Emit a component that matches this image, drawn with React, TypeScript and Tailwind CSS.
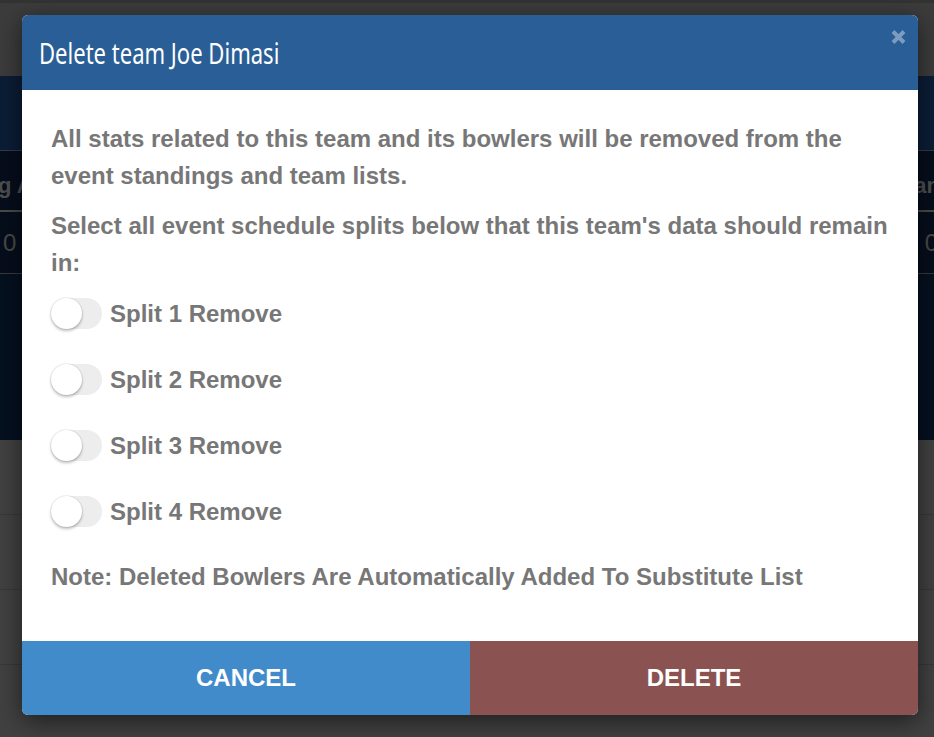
import { useState } from 'react';

const splits = ['Split 1 Remove', 'Split 2 Remove', 'Split 3 Remove', 'Split 4 Remove'];

function Toggle({ on, onChange }: { on: boolean; onChange: () => void }) {
  return (
    <button
      onClick={onChange}
      className={`relative w-[51px] h-[31px] rounded-full shrink-0 ${on ? 'bg-[#4cd964]' : 'bg-[#ededed]'}`}
    >
      <span
        className={`absolute top-0 h-[31px] w-[31px] rounded-full bg-white shadow-[0_2px_3px_rgba(0,0,0,0.25),0_0_0_1px_rgba(0,0,0,0.06)] ${on ? 'left-[20px]' : 'left-0'}`}
      />
    </button>
  );
}

export default function App() {
  const [checked, setChecked] = useState<boolean[]>([false, false, false, false]);

  const flip = (i: number) => setChecked(c => c.map((v, j) => (j === i ? !v : v)));

  return (
    <div className="relative w-[934px] h-[737px] overflow-hidden font-['Liberation_Sans',Arial,sans-serif]">
      {/* page behind the overlay (already dimmed) */}
      <div className="flex flex-col h-full">
        <div className="h-[76px] bg-[#3c3c3c] border-t-[3px] border-[#333]" />
        <div className="h-[74px] bg-[#0b1d36]" />
        <div className="h-[60px] bg-[#060e1c] border-t border-[#353b44] flex items-center justify-between pt-[10px] text-[22px] font-bold text-[#4e4e4e]">
          <span className="-ml-[2px]">g A</span>
          <span className="-mr-[6px]">an</span>
        </div>
        <div className="h-[63px] bg-[#060e1c] border-t-2 border-[#4a4a4a] flex items-center justify-between text-[24px] text-[#4a4a4a]">
          <span className="ml-[3px]">0</span>
          <span className="-mr-[4px]">0</span>
        </div>
        <div className="h-[167px] bg-[#051020] border-t border-[#3a3a3a]" />
        <div className="flex-1 bg-[#414141] flex flex-col">
          <div className="h-[75px] border-b border-[#383838]" />
          <div className="h-[75px] border-b border-[#383838]" />
          <div className="h-[75px] border-b border-[#383838]" />
        </div>
      </div>

      {/* modal */}
      <div className="absolute left-[22px] top-[15px] w-[896px] rounded-[6px] bg-white shadow-[0_6px_24px_rgba(0,0,0,0.55)] overflow-hidden">
        <header className="relative h-[75px] bg-[#2a5e96] flex items-center pl-[17px]">
          <h2 className="text-[29px] text-white font-['Noto_Sans',sans-serif] scale-x-[0.76] origin-left whitespace-nowrap">
            Delete team Joe Dimasi
          </h2>
          <button className="absolute right-[12px] top-[14px] p-0">
            <svg width="15" height="16" viewBox="0 0 15 16">
              <path d="M2 2.5 L13 13.5 M13 2.5 L2 13.5" stroke="#7b9bc1" strokeWidth="4" strokeLinecap="butt" />
            </svg>
          </button>
        </header>

        <div className="pl-[29px] pr-[24px] pt-[30px] pb-[46px] text-[24px] leading-[37px] font-bold text-[#777777]">
          <p className="mb-[13px]">
            All stats related to this team and its bowlers will be removed from the event standings and team lists.
          </p>
          <p>Select all event schedule splits below that this team's data should remain in:</p>

          <div className="mt-[14px] flex flex-col gap-[29px]">
            {splits.map((s, i) => (
              <label key={s} className="flex items-center gap-[8px] cursor-pointer">
                <Toggle on={checked[i]} onChange={() => flip(i)} />
                <span>{s}</span>
              </label>
            ))}
          </div>

          <p className="mt-[28px]">Note: Deleted Bowlers Are Automatically Added To Substitute List</p>
        </div>

        <footer className="flex h-[74px] text-[24px] font-bold text-white">
          <button className="flex-1 bg-[#428bca]">CANCEL</button>
          <button className="flex-1 bg-[#8a5250]">DELETE</button>
        </footer>
      </div>
    </div>
  );
}
